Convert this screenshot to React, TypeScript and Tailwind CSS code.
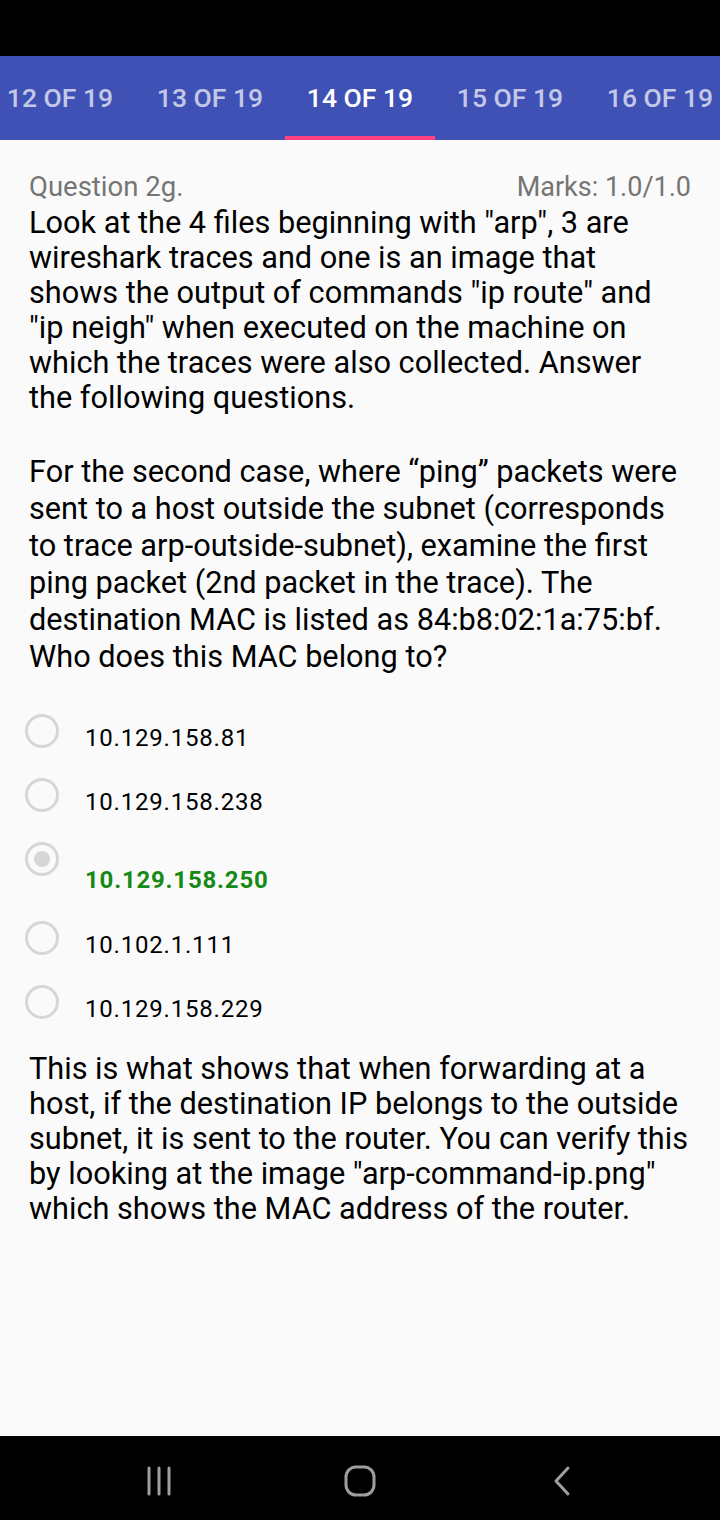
import React from "react";

const tabs = ["12 OF 19", "13 OF 19", "14 OF 19", "15 OF 19", "16 OF 19"];
const options = [
  { t: "10.129.158.81" },
  { t: "10.129.158.238" },
  { t: "10.129.158.250", sel: true },
  { t: "10.102.1.111" },
  { t: "10.129.158.229" },
];

export default function App() {
  return (
    <div className="w-[720px] h-[1520px] flex flex-col bg-[#fafafa] overflow-hidden" style={{ fontFamily: "Roboto, 'Noto Sans', sans-serif" }}>
      <div className="h-[56px] bg-black shrink-0" />
      <div className="h-[84px] bg-[#3f51b5] flex shrink-0 ml-[-15px]">
        {tabs.map((t, i) => (
          <div key={t} className="w-[150px] shrink-0 flex flex-col">
            <div className={`flex-1 flex items-center justify-center pt-[4px] text-[26.5px] font-medium ${i === 2 ? "text-white" : "text-white/70"}`}>{t}</div>
            <div className={`h-[4px] ${i === 2 ? "bg-[#ff4081]" : ""}`} />
          </div>
        ))}
      </div>
      <div className="flex-1 px-[29px] pt-[30px] text-black">
        <div className="flex justify-between text-[27.5px] leading-[34px] text-[#757575]">
          <span>Question 2g.</span>
          <span className="text-[27px]">Marks: 1.0/1.0</span>
        </div>
        <p className="text-[30.7px] leading-[35px] mt-[1px]">
          Look at the 4 files beginning with "arp", 3 are wireshark traces and one is an image that shows the output of commands "ip route" and "ip neigh" when executed on the machine on which the traces were also collected. Answer the following questions.
        </p>
        <p className="text-[30.7px] leading-[37px] mt-[38px]">
          For the second case, where “ping” packets were sent to a host outside the subnet (corresponds to trace arp-outside-subnet), examine the first ping packet (2nd packet in the trace). The destination MAC is listed as 84:b8:02:1a:75:bf. Who does this MAC belong to?
        </p>
        <div className="mt-[36px] ml-[-4px] flex flex-col">
          {options.map((o) => (
            <div key={o.t} className={`flex ${o.sel ? "h-[79px]" : "h-[64px]"}`}>
              <div className="w-[60px] shrink-0 pt-[3px]">
                <div className="w-[34px] h-[34px] rounded-full border-[3px] border-[#d6d6d6] flex items-center justify-center">
                  {o.sel && <div className="w-[16px] h-[16px] rounded-full bg-[#d6d6d6]" />}
                </div>
              </div>
              <div className={`text-[24px] tracking-[0.8px] ${o.sel ? "pt-[23px] font-bold text-[#168a16]" : "pt-[9px] text-black"}`}>{o.t}</div>
            </div>
          ))}
        </div>
        <p className="text-[30.7px] leading-[35px] mt-[5px]">
          This is what shows that when forwarding at a host, if the destination IP belongs to the outside subnet, it is sent to the router. You can verify this by looking at the image "arp-command-ip.png" which shows the MAC address of the router.
        </p>
      </div>
      <div className="h-[84px] bg-black shrink-0 flex items-center pt-[6px] pl-[60px]">
        <div className="w-[200px] flex justify-center">
          <svg width="28" height="30" viewBox="0 0 28 30">
            <g stroke="#9e9e9e" strokeWidth="3" strokeLinecap="round">
              <line x1="3" y1="2" x2="3" y2="28" />
              <line x1="13" y1="2" x2="13" y2="28" />
              <line x1="23" y1="2" x2="23" y2="28" />
            </g>
          </svg>
        </div>
        <div className="w-[200px] flex justify-center">
          <svg width="32" height="32" viewBox="0 0 32 32">
            <rect x="2" y="2" width="28" height="28" rx="10" fill="none" stroke="#9e9e9e" strokeWidth="3" />
          </svg>
        </div>
        <div className="w-[200px] flex justify-center">
          <svg width="20" height="32" viewBox="0 0 20 32" className="ml-[4px]">
            <polyline points="16,3 4,16 16,29" fill="none" stroke="#9e9e9e" strokeWidth="3" strokeLinecap="round" strokeLinejoin="round" />
          </svg>
        </div>
      </div>
    </div>
  );
}
